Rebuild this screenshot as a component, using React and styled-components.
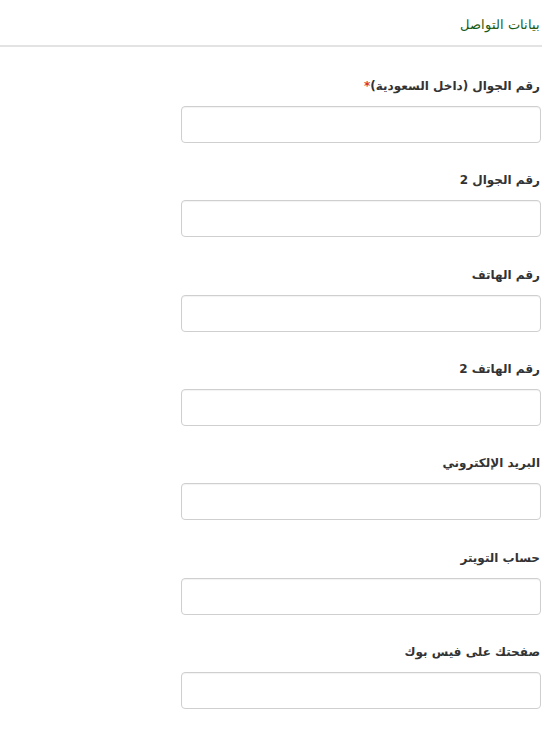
import React from "react";
import styled, { createGlobalStyle } from "styled-components";

const Global = createGlobalStyle`
  html, body { margin: 0; padding: 0; background: #fff; }
  body { font-family: "DejaVu Sans", "Noto Sans", sans-serif; }
`;

const Panel = styled.div`
  direction: rtl;
  width: 542px;
`;

const Header = styled.div`
  padding: 15px 2px 10px 0;
  border-bottom: 2px solid #e3e3e3;
  font-family: "Liberation Sans", Arial, sans-serif;
  font-size: 13px;
  line-height: 20px;
  color: #175c17;
`;

const Form = styled.div`
  padding: 29px 1px 0 0;
  display: flex;
  flex-direction: column;
`;

const Field = styled.div`
  display: flex;
  flex-direction: column;
  align-items: flex-start;
  margin-bottom: 27.33px;
`;

const Label = styled.label`
  font-family: "DejaVu Sans", sans-serif;
  font-weight: bold;
  font-size: 12px;
  line-height: 20px;
  color: #333;
  margin: 0 0 10px 0;
  padding-right: 1px;
`;

const Star = styled.span`
  color: #d9342b;
`;

const Input = styled.input`
  box-sizing: border-box;
  width: 360px;
  height: 37px;
  border: 1px solid #cfcfcf;
  border-radius: 4px;
  background: #fff;
  box-shadow: inset 0 1px 1px rgba(0, 0, 0, 0.05);
  outline: none;
  padding: 6px 12px;
  font-size: 14px;
`;

const fields = [
  { label: "رقم الجوال (داخل السعودية)", required: true },
  { label: "رقم الجوال 2" },
  { label: "رقم الهاتف" },
  { label: "رقم الهاتف 2" },
  { label: "البريد الإلكتروني" },
  { label: "حساب التويتر" },
  { label: "صفحتك على فيس بوك" },
];

export default function App() {
  return (
    <>
      <Global />
      <Panel>
        <Header>بيانات التواصل</Header>
        <Form>
          {fields.map((f, i) => (
            <Field key={i}>
              <Label>
                {f.label}
                {f.required && <Star>*</Star>}
              </Label>
              <Input type="text" />
            </Field>
          ))}
        </Form>
      </Panel>
    </>
  );
}
